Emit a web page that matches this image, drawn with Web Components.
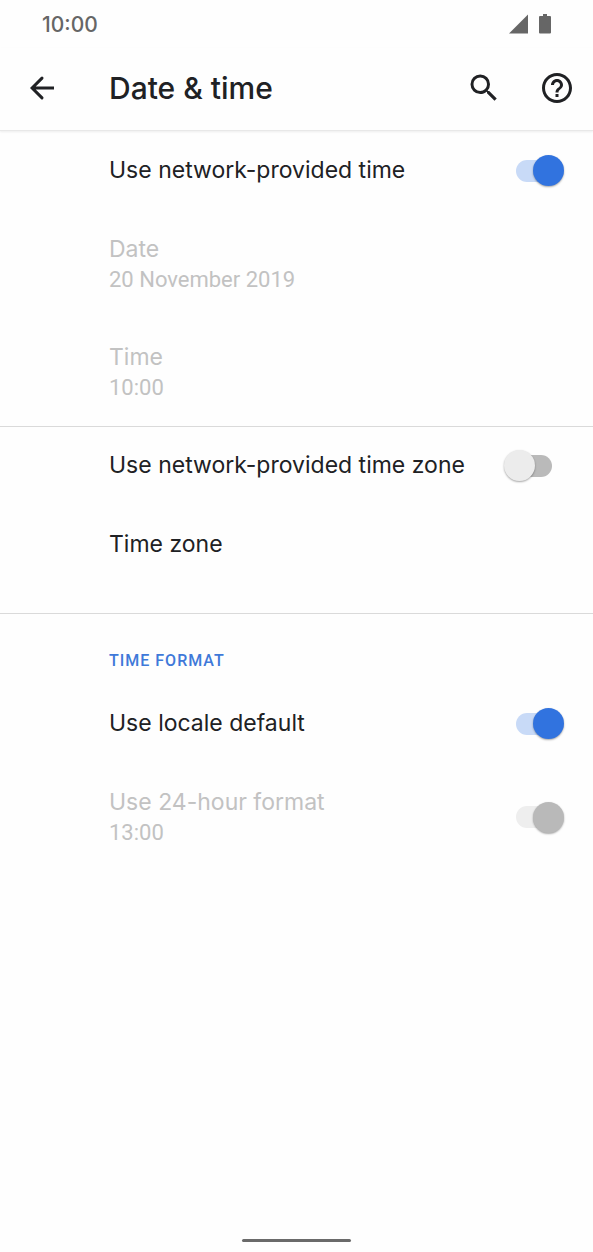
<!DOCTYPE html>
<html lang="en">
<head>
<meta charset="utf-8">
<meta name="viewport" content="width=device-width, initial-scale=1">
<title>Date &amp; time</title>
<style>
  body {
    margin: 0;
    background: #fefefe;
    color: #202124;
    font-family: Inter, "Open Sans", sans-serif;
  }
</style>
</head>
<body>
<settings-screen>
  <status-bar slot="status" time="10:00"></status-bar>
  <app-bar slot="header">Date &amp; time</app-bar>
  <settings-group>
    <switch-row checked>Use network-provided time</switch-row>
    <link-row disabled summary="20 November 2019">Date</link-row>
    <link-row disabled summary="10:00">Time</link-row>
  </settings-group>
  <settings-group divided>
    <switch-row>Use network-provided time zone</switch-row>
    <link-row summary="">Time zone</link-row>
  </settings-group>
  <settings-group divided heading="TIME FORMAT">
    <switch-row checked>Use locale default</switch-row>
    <switch-row checked disabled summary="13:00">Use 24-hour format</switch-row>
  </settings-group>
  <nav-handle slot="nav"></nav-handle>
</settings-screen>

<script>
  const attach = (host, html) => {
    host.attachShadow({ mode: "open" }).innerHTML = html;
    return host.shadowRoot;
  };

  const rowStyle = `
    :host { display: block; }
    .row {
      display: flex; align-items: center; gap: 24px;
      box-sizing: border-box; width: 100%;
      padding: 24px 29px 24px 109px; margin: 0; border: 0;
      background: none; color: inherit; font: inherit; text-align: left;
    }
    .text { flex: 1; min-width: 0; display: grid; }
    .title { font-size: 23px; line-height: 31px; }
    .summary {
      min-height: 29px; color: #5f6368;
      font: 400 22px/29px Roboto, sans-serif;
    }
    :host([disabled]) .title, :host([disabled]) .summary { color: #c2c2c2; }`;

  customElements.define("settings-screen", class extends HTMLElement {
    constructor() {
      super();
      attach(this, `
        <style>
          :host { display: flex; flex-direction: column; min-height: 100vh; }
          main { flex: 1; }
        </style>
        <slot name="status"></slot>
        <slot name="header"></slot>
        <main><slot></slot></main>
        <slot name="nav"></slot>`);
    }
  });

  customElements.define("status-bar", class extends HTMLElement {
    connectedCallback() {
      attach(this, `
        <style>
          :host {
            display: flex; align-items: center; justify-content: space-between;
            height: 48px; padding: 0 42px; color: #666;
            font-size: 21px; font-weight: 500;
          }
          .icons { display: flex; gap: 11px; }
          svg { display: block; fill: currentColor; }
        </style>
        <time>${this.getAttribute("time")}</time>
        <div class="icons">
          <svg width="19" height="20" viewBox="0 0 19 20" aria-hidden="true"><path d="M0 19.500 19 0.500V19.500z"/></svg>
          <svg width="12" height="20" viewBox="0 0 12 20" aria-hidden="true"><path d="M4 0h4v2h3a1 1 0 0 1 1 1v15.500a1 1 0 0 1-1 1H1a1 1 0 0 1-1-1V3a1 1 0 0 1 1-1h3z"/></svg>
        </div>`);
    }
  });

  customElements.define("app-bar", class extends HTMLElement {
    constructor() {
      super();
      attach(this, `
        <style>
          :host {
            display: flex; align-items: center; height: 80px;
            padding: 0 18px 3px 24px; background: #fefefe;
            box-shadow: inset 0 -1px #e8e8e8, 0 1px 2px #ededed;
          }
          h1 { flex: 1; margin: 0 0 0 49px; font-size: 30px; font-weight: 500; line-height: 40px; }
          button { display: grid; place-items: center; padding: 0; border: 0; background: none; color: inherit; }
          svg { width: 36px; height: 36px; fill: currentColor; display: block; }
          .actions { display: flex; gap: 37px; }
        </style>
        <button aria-label="Back"><svg viewBox="0 0 24 24"><path d="M20 11H7.830l4.880-4.880a1 1 0 0 0 0-1.410 1 1 0 0 0-1.410 0L4 12l7.300 7.300a1 1 0 0 0 1.410 0 1 1 0 0 0 0-1.410L7.830 13H20z"/></svg></button>
        <h1><slot></slot></h1>
        <div class="actions">
          <button aria-label="Search"><svg viewBox="0 0 24 24"><path d="M15.500 14h-.79l-.28-.27A6.470 6.470 0 0 0 16 9.500 6.500 6.500 0 1 0 9.500 16c1.610 0 3.090-.59 4.230-1.570l.27.28v.79l5 4.990L20.490 19l-4.990-5zm-6 0C7.010 14 5 11.990 5 9.500S7.010 5 9.500 5 14 7.010 14 9.500 11.990 14 9.500 14z"/></svg></button>
          <button aria-label="Help"><svg viewBox="0 0 24 24"><path d="M11 18h2v-2h-2v2zm1-16C6.480 2 2 6.480 2 12s4.480 10 10 10 10-4.480 10-10S17.520 2 12 2zm0 18c-4.410 0-8-3.590-8-8s3.590-8 8-8 8 3.590 8 8-3.590 8-8 8zm0-14c-2.210 0-4 1.790-4 4h2c0-1.100.9-2 2-2s2 .9 2 2c0 2-3 1.750-3 5h2c0-2.250 3-2.500 3-5 0-2.210-1.790-4-4-4z"/></svg></button>
        </div>`);
    }
  });

  customElements.define("settings-group", class extends HTMLElement {
    connectedCallback() {
      const heading = this.getAttribute("heading");
      attach(this, `
        <style>
          :host { display: block; }
          :host([divided]) { box-shadow: inset 0 1px #dadada; }
          h2 {
            margin: 0; padding: 37px 29px 12px 109px; color: #3f79d9;
            font: 500 16px/22px Roboto, sans-serif; letter-spacing: 1px;
          }
        </style>
        <section>${heading ? `<h2>${heading}</h2>` : ""}<slot></slot></section>`);
    }
  });

  customElements.define("link-row", class extends HTMLElement {
    connectedCallback() {
      const disabled = this.hasAttribute("disabled") ? "disabled" : "";
      attach(this, `
        <style>${rowStyle}</style>
        <button class="row" ${disabled}>
          <span class="text">
            <span class="title"><slot></slot></span>
            <span class="summary">${this.getAttribute("summary")}</span>
          </span>
        </button>`);
    }
  });

  customElements.define("switch-row", class extends HTMLElement {
    connectedCallback() {
      const summary = this.getAttribute("summary");
      const flags = ["checked", "disabled"].filter(name => this.hasAttribute(name)).join(" ");
      attach(this, `
        <style>
          ${rowStyle}
          .row { padding-top: 0; padding-bottom: 0; }
          .text { padding: 24px 0; }
          input {
            appearance: none; display: grid; align-items: center; flex: none;
            width: 60px; height: 31px; margin: 0;
          }
          input::before, input::after { content: ""; grid-area: 1 / 1; }
          input::before {
            justify-self: center; width: 36px; height: 22px;
            border-radius: 11px; background: #bababa;
          }
          input::after {
            justify-self: start; width: 31px; height: 31px;
            border-radius: 50%; background: #ececec;
            box-shadow: 0 1px 2px rgba(0, 0, 0, .35);
          }
          input:checked::before { background: #c8daf7; }
          input:checked::after { justify-self: end; background: #3173df; }
          input:disabled::before { background: #eee; }
          input:disabled::after { background: #b9b9b9; }
        </style>
        <div class="row">
          <label class="text" for="toggle">
            <span class="title"><slot></slot></span>
            ${summary ? `<span class="summary">${summary}</span>` : ""}
          </label>
          <input id="toggle" type="checkbox" role="switch" ${flags}>
        </div>`);
    }
  });

  customElements.define("nav-handle", class extends HTMLElement {
    constructor() {
      super();
      attach(this, `
        <style>
          :host { display: flex; justify-content: center; padding: 10px 0; }
          div { width: 109px; height: 3px; border-radius: 2px; background: #6a6a6a; }
        </style>
        <div></div>`);
    }
  });
</script>
</body>
</html>
